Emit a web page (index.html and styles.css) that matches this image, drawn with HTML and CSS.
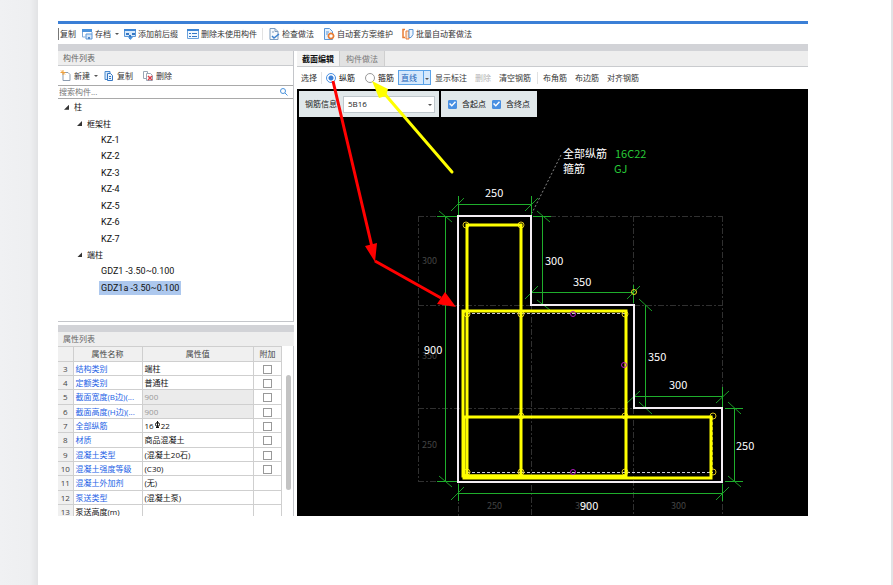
FILE: index.html
```html
<!DOCTYPE html>
<html lang="zh-CN">
<head>
<meta charset="utf-8">
<title>截面编辑</title>
<link rel="stylesheet" href="styles.css">
</head>
<body>
<main class="page">
<div class="app">
  <header class="toolbar main-bar">
    <button class="btn first">复制</button>
    <button class="btn"><svg class="icon" viewBox="0 0 12 12"><path d="M1 1h10v3H1z" fill="#4b93dc"/><path d="M1.500 4v5h3M11 4v2" fill="none" stroke="#7fa9d6"/><path d="M5 6h6v5H5z" fill="#d7e8fa" stroke="#5b97d8"/><path d="M7 9h2v2H7z" fill="#4b86c8"/></svg>存档<span class="caret"></span></button>
    <button class="btn"><svg class="icon" viewBox="0 0 12 12"><path d="M.5 1.500h11v7H.5z" fill="#d9eafb" stroke="#5b97d8"/><path d="M0 1h12v2H0z" fill="#3f86d4"/><path d="M2 5h3v2H2zM8 5h3v2H8zM5 7h2v4H5z" fill="#3577c4"/><path d="M4 9h5l-2.500 3z" fill="#4b93dc"/></svg>添加前后缀</button>
    <button class="btn spaced"><svg class="icon" viewBox="0 0 12 12"><path d="M.5 1.500h11v9H.5z" fill="#f2f8fe" stroke="#6ba2dc"/><path d="M0 1h12v2H0z" fill="#3f86d4"/><path d="M2 5.500h2M5 5.500h5M2 8.500h2M5 8.500h5" stroke="#3577c4"/></svg>删除未使用构件</button>
    <span class="sep"></span>
    <button class="btn"><svg class="icon" viewBox="0 0 12 12"><path d="M2 .5h5l3 3v8H2z" fill="#f7fafd" stroke="#7f9dbd"/><path d="M7 .5v3h3M4 4h2" fill="none" stroke="#7f9dbd"/><path d="M4 8l2 2 5-4" fill="none" stroke="#3c82d0" stroke-width="1.500"/></svg>检查做法</button>
    <button class="btn spaced"><svg class="icon" viewBox="0 0 12 12"><path d="M1.500.5h5l3 3v8h-8z" fill="#e6f1fc" stroke="#5b97d8"/><path d="M3 4h3M3 6h2" stroke="#5b97d8"/><circle cx="8" cy="8" r="2.500" fill="#fff" stroke="#e87c33" stroke-width="1.500"/><path d="M8 4.500v1M8 10.500v1M4.500 8h1M10.500 8h1" stroke="#e87c33"/></svg>自动套方案维护</button>
    <button class="btn spaced"><svg class="icon" viewBox="0 0 12 12"><path d="M3 1.500H1v8h2" fill="none" stroke="#e87c33" stroke-width="1.500"/><path d="M4 3h3v8H4z" fill="#fce6d6" stroke="#e87c33"/><path d="M7 1.500h4v5l-2 3H7z" fill="#eef5fd" stroke="#5b97d8"/></svg>批量自动套做法</button>
  </header>
  <div class="workspace">
    <aside class="side">
      <section class="list-panel">
        <h2 class="panel-title">构件列表</h2>
        <div class="toolbar list-bar">
          <button class="btn"><svg class="icon" viewBox="0 0 12 12"><path d="M3 2.500h5l2 2v6H3z" fill="#fff" stroke="#8b9bb0"/><path d="M3 0v5M.5 2.500h5M1 .5l4 4" stroke="#f0a13c"/></svg>新建<span class="caret"></span></button>
          <button class="btn"><svg class="icon" viewBox="0 0 12 12"><path d="M2 1.500h5v8H2z" fill="#d7e8fa" stroke="#4b8bd0"/><path d="M4.500 3.500h3l2 2v5h-5z" fill="#eaf4fe" stroke="#3577c4"/><path d="M6 6.500h2M6 8.500h2" stroke="#3577c4"/></svg>复制</button>
          <button class="btn spaced"><svg class="icon" viewBox="0 0 12 12"><path d="M1.500 1.500h4v7h-4z" fill="#fff" stroke="#9aa6b5"/><path d="M4.500 3.500h4l2 2v5h-6z" fill="#fff" stroke="#9aa6b5"/><path d="M6 6l4 4M10 6l-4 4" stroke="#dc3f4a" stroke-width="1.500"/></svg>删除</button>
        </div>
        <div class="search">
          <input type="text" placeholder="搜索构件..." aria-label="搜索构件">
          <svg class="lens" viewBox="0 0 8 8"><circle cx="3" cy="3" r="2.500" fill="none" stroke="#4b93dc"/><path d="M5 5l2.500 2.500" stroke="#4b93dc"/></svg>
        </div>
        <ul class="tree">
          <li class="l1"><span class="twist"></span>柱</li>
          <li class="l2"><span class="twist"></span>框架柱</li>
          <li class="l3"><span>KZ-1</span></li>
          <li class="l3"><span>KZ-2</span></li>
          <li class="l3"><span>KZ-3</span></li>
          <li class="l3"><span>KZ-4</span></li>
          <li class="l3"><span>KZ-5</span></li>
          <li class="l3"><span>KZ-6</span></li>
          <li class="l3"><span>KZ-7</span></li>
          <li class="l2"><span class="twist"></span>端柱</li>
          <li class="l3"><span>GDZ1 -3.50~0.100</span></li>
          <li class="l3"><span class="selected">GDZ1a -3.50~0.100</span></li>
        </ul>
      </section>
      <section class="props-panel">
        <h2 class="panel-title">属性列表</h2>
        <div class="props">
          <table>
            <colgroup><col class="c-num"><col class="c-name"><col><col class="c-add"></colgroup>
            <thead><tr><th></th><th>属性名称</th><th>属性值</th><th>附加</th></tr></thead>
            <tbody>
              <tr><th>3</th><td class="key">结构类别</td><td>端柱</td><td class="add"><input type="checkbox" aria-label="附加 结构类别"></td></tr>
              <tr><th>4</th><td class="key">定额类别</td><td>普通柱</td><td class="add"><input type="checkbox" aria-label="附加 定额类别"></td></tr>
              <tr><th>5</th><td class="key">截面宽度(B边)(...</td><td class="locked">900</td><td class="add"><input type="checkbox" aria-label="附加 截面宽度"></td></tr>
              <tr><th>6</th><td class="key">截面高度(H边)(...</td><td class="locked">900</td><td class="add"><input type="checkbox" aria-label="附加 截面高度"></td></tr>
              <tr><th>7</th><td class="key">全部纵筋</td><td>16<svg class="rebar" viewBox="0 0 7 8"><circle cx="3.500" cy="3.500" r="2" fill="none" stroke="#111"/><path d="M3.500 0v7M2 6.500h3" stroke="#111"/></svg>22</td><td class="add"><input type="checkbox" aria-label="附加 全部纵筋"></td></tr>
              <tr><th>8</th><td class="key">材质</td><td>商品混凝土</td><td class="add"><input type="checkbox" aria-label="附加 材质"></td></tr>
              <tr><th>9</th><td class="key">混凝土类型</td><td>(混凝土20石)</td><td class="add"><input type="checkbox" aria-label="附加 混凝土类型"></td></tr>
              <tr><th>10</th><td class="key">混凝土强度等级</td><td>(C30)</td><td class="add"><input type="checkbox" aria-label="附加 混凝土强度等级"></td></tr>
              <tr><th>11</th><td class="key">混凝土外加剂</td><td>(无)</td><td></td></tr>
              <tr><th>12</th><td class="key">泵送类型</td><td>(混凝土泵)</td><td></td></tr>
              <tr><th>13</th><td>泵送高度(m)</td><td></td><td></td></tr>
            </tbody>
          </table>
          <div class="scroll"><span class="thumb"></span></div>
        </div>
      </section>
    </aside>
    <section class="editor">
      <nav class="tabs">
        <button class="tab active">截面编辑</button>
        <button class="tab">构件做法</button>
      </nav>
      <div class="toolbar edit-bar">
        <button class="btn">选择</button>
        <span class="sep"></span>
        <label class="opt"><input type="radio" name="bar" checked>纵筋</label>
        <label class="opt wide"><input type="radio" name="bar">箍筋</label>
        <span class="drop line-drop"><select aria-label="绘制方式"><option>直线</option></select></span>
        <button class="btn">显示标注</button>
        <button class="btn spaced" disabled>删除</button>
        <button class="btn spaced">清空钢筋</button>
        <span class="sep gap-sep"></span>
        <button class="btn">布角筋</button>
        <button class="btn spaced">布边筋</button>
        <button class="btn spaced">对齐钢筋</button>
      </div>
      <div class="canvas">
        <svg class="drawing" viewBox="297 89 511 427" preserveAspectRatio="xMinYMin meet">
          <g class="guide">
            <path d="M418 216.500H722M418 305.500H722M418 408.500H722M418 481.500H458"/>
            <path d="M418.500 216V482M531.500 305V516M633.500 216V516M722.500 216V516M458.500 482V516"/>
          </g>
          <g class="faint">
            <text x="422" y="264">300</text><text x="422" y="359">350</text><text x="422" y="448">250</text>
            <text x="487" y="509">250</text><text x="575" y="509">350</text><text x="671" y="509">300</text>
          </g>
          <g class="dim">
            <path d="M458 204.500H531M458.500 196V215M531.500 196V215"/>
            <path d="M445.500 216V482M437 216.500H457M437 481.500H457"/>
            <path d="M542.500 216V305M533 216.500H551"/>
            <path d="M531 292.500H634M531.500 285V303M633.500 285V303"/>
            <path d="M645.500 305V408M634 396.500H722M722.500 387V407"/>
            <path d="M734.500 408V482M725 408.500H743M725 481.500H743"/>
            <path d="M458 493.500H722M458.500 484V501M722.500 484V501"/>
          </g>
          <g class="tick">
            <path d="M451 211l13-13M525 211l13-13M439 211l13 11M439 476l13 11M537 211l13 11M537 300l13 10M525 299l13-13M627 299l13-13"/>
            <path d="M639 299l13 12M639 402l13 12M627 403l13-12M716 403l13-12M728 402l13 12M728 476l13 11M451 500l13-13M716 500l13-13"/>
          </g>
          <path class="leader" d="M561 155L532 213"/>
          <path class="outline" d="M458 216H531V305H634V408H722V482H458Z"/>
          <path class="links" d="M467 313.500H625M467 472.500H713"/>
          <path class="links side-link" d="M712.500 417V472"/>
          <g class="rebars">
            <circle cx="466" cy="225" r="3"/><circle cx="521" cy="225" r="3"/>
            <circle cx="467" cy="314" r="3"/><circle cx="521" cy="314" r="3"/><circle cx="625" cy="314" r="3"/>
            <circle cx="521" cy="416" r="3"/><circle cx="625" cy="416" r="3"/><circle cx="713" cy="416" r="3"/>
            <circle cx="467" cy="472" r="3"/><circle cx="521" cy="472" r="3"/><circle cx="625" cy="472" r="3"/><circle cx="713" cy="472" r="3"/>
          </g>
          <g class="stirrup">
            <path d="M467 225H521V476H467Z"/>
            <path d="M463 311H626V476H463Z"/>
            <path d="M464 417H711V478H464Z"/>
          </g>
          <circle class="node" cx="634" cy="292" r="2.500"/>
          <g class="mid">
            <circle cx="573" cy="314" r="2.500"/><circle cx="624" cy="365" r="2.500"/><circle cx="573" cy="472" r="2.500"/>
          </g>
          <g class="label">
            <text x="485" y="197">250</text><text x="545" y="265">300</text><text x="573" y="286">350</text>
            <text x="648" y="361">350</text><text x="669" y="389">300</text><text x="736" y="450">250</text>
            <text x="424" y="354">900</text><text x="580" y="510">900</text>
            <text x="563" y="158">全部纵筋</text><text x="563" y="173">箍筋</text>
          </g>
          <g class="label green"><text x="615" y="158">16C22</text><text x="614" y="173">GJ</text></g>
        </svg>
        <div class="float">
          <div class="chip info">
            <label for="bar-info">钢筋信息</label>
            <span class="drop info-drop"><select id="bar-info"><option>5B16</option></select></span>
          </div>
          <div class="chip ends">
            <label class="opt"><input type="checkbox" checked>含起点</label>
            <label class="opt"><input type="checkbox" checked>含终点</label>
          </div>
        </div>
      </div>
      <svg class="arrows" viewBox="297 51 511 465" preserveAspectRatio="xMinYMin meet">
        <path d="M333 81L372 247M375 261L441 298" stroke="#f00" stroke-width="3"/>
        <path d="M375 262L365 246L377 243ZM456 307L437 304L445 292Z" fill="#f00"/>
        <path d="M452 172L383 92" stroke="#ff0" stroke-width="3" stroke-linecap="round"/>
        <path d="M372 81L388 89L386 96L379 98Z" fill="#ff0"/>
      </svg>
    </section>
  </div>
</div>
</main>
</body>
</html>
```
FILE: styles.css
```css
* { box-sizing: border-box; }

body {
  margin: 0;
  min-height: 100vh;
  display: flex;
  background: linear-gradient(to right, #f0f1f3 0, #eeeff1 30px, #e2e3e5 38px);
  font-family: "Open Sans", "Noto Sans CJK SC", sans-serif;
  font-size: 8px;
  line-height: 12px;
  color: #333;
}

button, input, select { font: inherit; color: inherit; }
button { border: 0; padding: 0; background: none; white-space: nowrap; }

.page {
  flex: 1;
  margin: 0 2px 0 38px;
  padding: 21px 83px 69px 20px;
  background: #fff;
}

.app { border-top: 3px solid #3b7fd6; }

/* Toolbars */
.toolbar { display: flex; align-items: center; gap: 5px; white-space: nowrap; }
.btn { display: inline-flex; align-items: center; gap: 2px; }
.btn:disabled { color: #b5b5b5; }
.spaced { margin-left: 4px; }
.icon { width: 12px; height: 12px; flex: none; }
.main-bar { height: 20px; }
.main-bar .first { padding: 0 0 0 1px; border-left: 1px solid #777; }
.sep { width: 1px; height: 12px; background: #e2e2e2; }
.caret {
  margin-left: 2px;
  border: 2px solid transparent;
  border-top-color: #555;
  border-bottom: 0;
}

/* Workspace */
.workspace {
  display: grid;
  grid-template-columns: 236px minmax(0, 1fr);
  gap: 3px;
  background: linear-gradient(#d2d3d7, #d2d3d7) 0 0 / 100% 7px no-repeat;
  padding-top: 7px;
}
.side { display: flex; flex-direction: column; height: 465px; }
.list-panel { height: 271px; border: solid #c4c6ca; border-width: 0 1px 1px 0; }
.panel-title {
  margin: 0;
  padding: 0 5px;
  height: 15px;
  font-size: 8px;
  font-weight: 400;
  line-height: 14px;
  color: #666;
  background: #eee;
}
.list-panel .panel-title { border-bottom: 1px solid #c9cbce; }
.props-panel .panel-title { height: 14px; }
.list-bar { height: 19px; padding-left: 2px; }
.search {
  display: flex;
  align-items: center;
  height: 14px;
  padding: 0 5px 0 1px;
  border: solid #a9a9a9;
  border-width: 1px 0;
}
.search input { flex: 1; min-width: 0; border: 0; padding: 0; height: 12px; outline: 0; }
.search input::placeholder { color: #777; }
.lens { width: 8px; height: 8px; }

.tree {
  margin: 0;
  padding: 0;
  height: 197px;
  display: grid;
  grid-auto-rows: 1fr;
  list-style: none;
  color: #111;
}
.tree li { display: flex; align-items: center; }
.l1 { padding-left: 6px; }
.l2 { padding-left: 19px; }
.l3 { padding-left: 41px; font-family: Roboto, "Noto Sans CJK SC", sans-serif; font-size: 9px; }
.l3 span { padding: 1px 2px; }
.l3 .selected { background: #adc8ee; }
.twist {
  width: 5px;
  height: 5px;
  margin-right: 5px;
  background: #333;
  clip-path: polygon(100% 0, 100% 100%, 0 100%);
}

/* Properties */
.props-panel {
  flex: 1;
  min-height: 0;
  display: flex;
  flex-direction: column;
  margin-top: 3px;
  border-top: 7px solid #d2d3d7;
}
.props { flex: 1; min-height: 0; display: flex; overflow: hidden; border-right: 1px solid #c4c6ca; }
table { flex: 1; height: 172px; table-layout: fixed; border-collapse: collapse; }
.c-num { width: 15px; }
.c-name { width: 69px; }
.c-add { width: 28px; }
th, td {
  height: 14px;
  padding: 0 0 0 2px;
  border: 1px solid #cfcfcf;
  font-weight: 400;
  line-height: 12px;
  text-align: left;
  white-space: nowrap;
  overflow: hidden;
}
th { padding: 0; text-align: center; color: #444; background: #f0f0f0; }
thead th { height: 15px; }
tr > :first-child { border-left: 0; }
tbody tr:nth-child(3n) > * { height: 15px; }
td { color: #111; }
.key { color: #2463e6; }
.locked { color: #999; background: #ebebeb; }
.add { padding: 0; text-align: center; }
.rebar { width: 7px; height: 8px; }
.scroll { width: 11px; padding: 29px 2px 0 4px; }
.thumb { display: block; height: 115px; border-radius: 3px; background: #c3c3c3; }

input[type="checkbox"] {
  appearance: none;
  width: 9px;
  height: 9px;
  margin: 0;
  border: 1px solid #999;
  background: #fff;
  vertical-align: middle;
}
input[type="checkbox"]:checked { border-color: #4a90e2; border-radius: 1px; background: #4a90e2; }
input[type="checkbox"]:checked::after {
  content: "";
  display: block;
  width: 7px;
  height: 7px;
  background: #fff;
  clip-path: polygon(0 50%, 15% 35%, 40% 60%, 85% 10%, 100% 25%, 40% 90%);
}
input[type="radio"] {
  appearance: none;
  width: 10px;
  height: 10px;
  margin: 0;
  border: 1px solid #999;
  border-radius: 50%;
  background: #fff;
}
input[type="radio"]:checked {
  border-color: #4a90e2;
  background: radial-gradient(circle, #3b7fd6 0 2px, #fff 3px);
}
.opt { display: inline-flex; align-items: center; gap: 3px; color: #111; }
.wide { margin-left: 6px; }

/* Editor */
.editor { position: relative; min-width: 0; }
.tabs { display: flex; height: 16px; background: #eee; border-bottom: 1px solid #c9cbce; }
.tab { padding: 0 6px; color: #777; background: #e2e2e2; border-right: 1px solid #cfcfcf; }
.tab.active { padding: 0 5px; color: #111; font-weight: 700; background: #f4f4f4; }
.edit-bar { height: 22px; padding: 0 0 1px 4px; gap: 4px; }
.gap-sep { margin: 0 1px 0 2px; }

.drop { position: relative; display: inline-flex; }
.drop::after {
  content: "";
  position: absolute;
  right: 3px;
  top: 50%;
  border: 2px solid transparent;
  border-top-color: #555;
  border-bottom: 0;
  pointer-events: none;
}
.drop select { appearance: none; width: 100%; border: 1px solid #bfc7cc; border-radius: 0; background: #fff; outline: 0; }
.line-drop select {
  width: 33px;
  height: 15px;
  padding: 0 2px;
  color: #1a62b8;
  border-color: #5ba3e8;
  background: linear-gradient(#5ba3e8, #5ba3e8) 24px 0 / 1px 100% no-repeat #d6e9fc;
}
.line-drop::after { right: 2px; }

.canvas { position: relative; height: 427px; background: #000; overflow: hidden; }
.drawing { display: block; width: 100%; height: 427px; fill: none; }
.float { position: absolute; left: 2px; top: 2px; display: flex; gap: 2px; }
.chip { display: flex; align-items: center; height: 26px; color: #222; background: #e1e8ea; }
.info { width: 140px; padding: 0 4px 0 6px; gap: 6px; }
.info label { white-space: nowrap; }
.info-drop { flex: 1; }
.info-drop select { height: 17px; padding: 0 4px; }
.ends { padding: 0 7px; gap: 6px; }
.ends .opt { gap: 5px; }

.arrows {
  position: absolute;
  left: 0;
  top: 0;
  width: 100%;
  height: 465px;
  fill: none;
  pointer-events: none;
}

.guide { stroke: #303030; stroke-dasharray: 6 2 2 2; }
.dim { stroke: #1fae2c; }
.tick { stroke: #1a9a26; }
.outline { stroke: #f4eef4; stroke-width: 2; }
.leader { stroke: #888; stroke-dasharray: 2 2; }
.links { stroke: #c8c8d8; stroke-dasharray: 3 2; }
.side-link { stroke: #8a8a20; }
.stirrup { stroke: #ff0; stroke-width: 3; }
.rebars { stroke: #d8c01c; }
.node { stroke: #e0e020; }
.mid { stroke: #b01cc0; }
.label { fill: #fff; font-family: "Noto Sans CJK SC", sans-serif; font-size: 11px; }
.green { fill: #28c838; }
.faint { fill: #444; font-family: "Noto Sans CJK SC", sans-serif; font-size: 9px; }
```
